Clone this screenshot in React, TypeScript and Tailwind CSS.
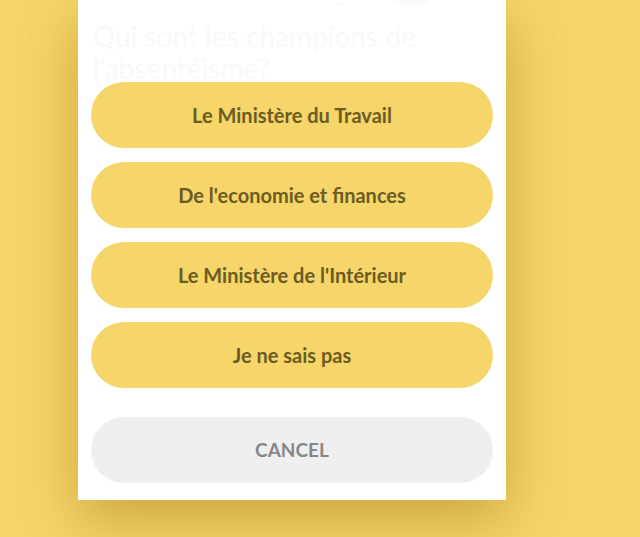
import React from 'react';

const answers = [
  "Le Ministère du Travail",
  "De l'economie et finances",
  "Le Ministère de l'Intérieur",
  "Je ne sais pas",
];

export default function App() {
  return (
    <div className="h-[537px] w-[640px] overflow-hidden bg-[#f6d56a] font-['Lato','Liberation_Sans',sans-serif]">
      <div className="ml-[78px] flex w-[428px] flex-col bg-white px-[13px] pb-[17px] shadow-[0_20px_55px_rgba(150,110,10,0.45)]">
        {/* faded status row behind the sheet */}
        <div className="flex h-[8px] items-start gap-[50px] pl-[244px]">
          <svg width="8" height="6" viewBox="0 0 8 6" className="text-[#f5f5f5]">
            <path d="M1 1 L4 5 L7 1" fill="none" stroke="currentColor" strokeWidth="1.2" />
          </svg>
          <span className="h-[5px] w-[36px] bg-[#fbfbfb]" />
        </div>
        <h1 className="mt-[12px] mb-[-2px] px-[2px] text-[28px] leading-[32px] font-normal text-[#f9f9f9]">
          Qui sont les champions de
          <br />
          l'absentéisme?
        </h1>

        <div className="flex flex-col gap-[14px]">
          {answers.map((a, i) => (
            <button
              key={i}
              className="flex h-[66px] w-full items-center justify-center rounded-full bg-[#f6d56a] text-[20px] font-bold text-[#6b5c22]"
            >
              {a}
            </button>
          ))}
        </div>

        <button className="mt-[29px] flex h-[66px] w-full items-center justify-center rounded-full bg-[#efefef] text-[19px] font-bold text-[#878787]">
          CANCEL
        </button>
      </div>
    </div>
  );
}
